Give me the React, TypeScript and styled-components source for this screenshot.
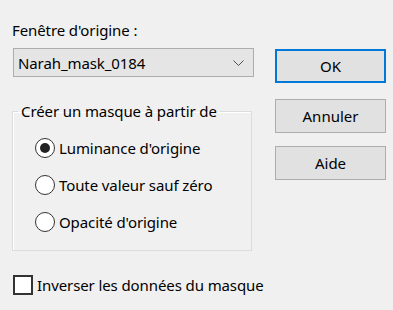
import { useState } from "react";
import styled, { createGlobalStyle } from "styled-components";

const GlobalStyle = createGlobalStyle`
  html, body {
    margin: 0;
    padding: 0;
    background: #f0f0f0;
  }
  body {
    font-family: "Noto Sans", "Open Sans", sans-serif;
    font-size: 15px;
    line-height: 20px;
    letter-spacing: -0.1px;
    color: #000;
  }
`;

const options = [
  "Luminance d'origine",
  "Toute valeur sauf zéro",
  "Opacité d'origine",
];

export default function App() {
  const [mode, setMode] = useState(0);
  const [invert, setInvert] = useState(false);

  return (
    <Dialog>
      <GlobalStyle />
      <Main>
        <LeftColumn>
          <FieldLabel>Fenêtre d'origine :</FieldLabel>
          <Combo role="combobox">
            <span>Narah_mask_0184</span>
            <svg width="11" height="6" viewBox="0 0 11 6">
              <path d="M0.5 0.5 L5.5 5.5 L10.5 0.5" fill="none" stroke="#505050" strokeWidth="1" />
            </svg>
          </Combo>
          <GroupBox>
            <Legend>Créer un masque à partir de</Legend>
            <RadioList>
              {options.map((label, i) => (
                <OptionRow key={label} onClick={() => setMode(i)}>
                  <RadioCircle $checked={mode === i} />
                  <span>{label}</span>
                </OptionRow>
              ))}
            </RadioList>
          </GroupBox>
        </LeftColumn>

        <ButtonColumn>
          <DialogButton $primary>OK</DialogButton>
          <DialogButton>Annuler</DialogButton>
          <DialogButton>Aide</DialogButton>
        </ButtonColumn>
      </Main>

      <CheckRow onClick={() => setInvert(!invert)}>
        <CheckBox $checked={invert} />
        <span>Inverser les données du masque</span>
      </CheckRow>
    </Dialog>
  );
}

const Dialog = styled.div`
  width: 393px;
  height: 310px;
  box-sizing: border-box;
  padding: 20px 7px 0 12px;
  display: flex;
  flex-direction: column;
`;

const Main = styled.div`
  display: flex;
  align-items: flex-start;
`;

const LeftColumn = styled.div`
  width: 242px;
  display: flex;
  flex-direction: column;
`;

const FieldLabel = styled.div`
  height: 20px;
`;

const Combo = styled.div`
  margin: 8px 0 0 1px;
  height: 29px;
  box-sizing: border-box;
  border: 1px solid #adadad;
  background: #e5e5e5;
  display: flex;
  align-items: center;
  justify-content: space-between;
  padding: 0 9px 0 4px;

  svg {
    display: block;
  }
`;

const GroupBox = styled.fieldset`
  margin: 24px 0 0 0;
  width: 240px;
  box-sizing: border-box;
  border: 1px solid #dcdcdc;
  box-shadow: inset 1px 1px 0 #fff;
  padding: 17px 0 18px 5px;
  min-width: 0;
`;

const Legend = styled.legend`
  padding: 0 3px;
  line-height: 20px;
`;

const RadioList = styled.div`
  display: flex;
  flex-direction: column;
  gap: 17px;
  padding-left: 17px;
`;

const OptionRow = styled.label`
  display: flex;
  align-items: center;
  gap: 4px;
  height: 20px;
  cursor: default;
`;

const RadioCircle = styled.span<{ $checked: boolean }>`
  width: 20px;
  height: 20px;
  box-sizing: border-box;
  border-radius: 50%;
  border: 1px solid #333;
  background: #fff;
  display: flex;
  align-items: center;
  justify-content: center;
  flex-shrink: 0;

  &::after {
    content: "";
    width: 10px;
    height: 10px;
    border-radius: 50%;
    background: #222;
    display: ${({ $checked }) => ($checked ? "block" : "none")};
  }
`;

const ButtonColumn = styled.div`
  margin: 29px 0 0 21px;
  display: flex;
  flex-direction: column;
  gap: 13px;
`;

const DialogButton = styled.button<{ $primary?: boolean }>`
  width: 111px;
  height: 34px;
  box-sizing: border-box;
  font: inherit;
  color: #000;
  background: #e1e1e1;
  border: ${({ $primary }) => ($primary ? "2px solid #0078d7" : "1px solid #adadad")};
  margin-bottom: ${({ $primary }) => ($primary ? "3px" : "0")};
  padding: 0;
`;

const CheckRow = styled.label`
  margin: 24px 0 0 1px;
  display: flex;
  align-items: center;
  gap: 4px;
  height: 20px;
  cursor: default;
`;

const CheckBox = styled.span<{ $checked: boolean }>`
  width: 20px;
  height: 20px;
  box-sizing: border-box;
  border: 2px solid #333;
  background: #fff;
  display: flex;
  align-items: center;
  justify-content: center;

  &::after {
    content: "✓";
    font-size: 14px;
    display: ${({ $checked }) => ($checked ? "block" : "none")};
  }
`;
